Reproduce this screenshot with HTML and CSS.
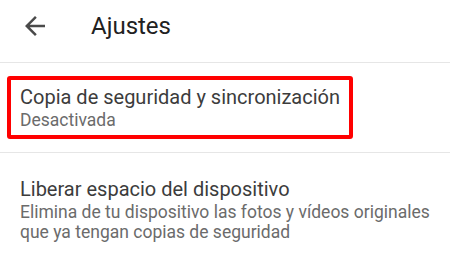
FILE: index.html
```html
<!DOCTYPE html>
<html lang="es">
<head>
<meta charset="utf-8">
<link rel="stylesheet" href="styles.css">
</head>
<body>
<header class="bar">
  <span class="back">
    <svg viewBox="0 0 24 24" width="30" height="30"><path d="M20 11H7.83l5.59-5.59L12 4l-8 8 8 8 1.41-1.41L7.83 13H20v-2z" fill="currentColor"/></svg>
  </span>
  <h1 class="bar-title">Ajustes</h1>
</header>
<div class="item item-first">
  <div class="item-title">Copia de seguridad y sincronización</div>
  <div class="item-sub">Desactivada</div>
  <div class="highlight"></div>
</div>
<div class="item item-second">
  <div class="item-title">Liberar espacio del dispositivo</div>
  <div class="item-desc">Elimina de tu dispositivo las fotos y vídeos originales que ya tengan copias de seguridad</div>
</div>
</body>
</html>
```

FILE: styles.css
```css
html, body {
  margin: 0;
  padding: 0;
  background: #ffffff;
}
body {
  font-family: Roboto, "Noto Sans", sans-serif;
  width: 450px;
}
.bar {
  display: flex;
  align-items: center;
  padding: 11px 0 21px 20px;
  border-bottom: 1px solid #e6e6e6;
}
.back {
  display: flex;
  width: 30px;
  height: 30px;
  color: #4a4a4a;
}
.bar-title {
  margin: 0 0 0 41px;
  font-size: 24px;
  line-height: 28px;
  font-weight: 400;
  color: #212121;
}
.item {
  position: relative;
  padding: 0 16px 0 20px;
}
.item-first {
  padding-top: 22px;
  padding-bottom: 21px;
  border-bottom: 1px solid #e6e6e6;
}
.item-second {
  padding-top: 24px;
}
.item-title {
  font-size: 20px;
  line-height: 25px;
  color: #3c3c3c;
}
.item-sub {
  font-size: 17.5px;
  line-height: 21px;
  color: #6b6b6b;
}
.item-desc {
  font-size: 17.5px;
  line-height: 20px;
  color: #6b6b6b;
}
.highlight {
  position: absolute;
  left: 7px;
  top: 13px;
  width: 346px;
  height: 63px;
  box-sizing: border-box;
  border: 4px solid #ff0000;
  border-radius: 3px;
}
```
